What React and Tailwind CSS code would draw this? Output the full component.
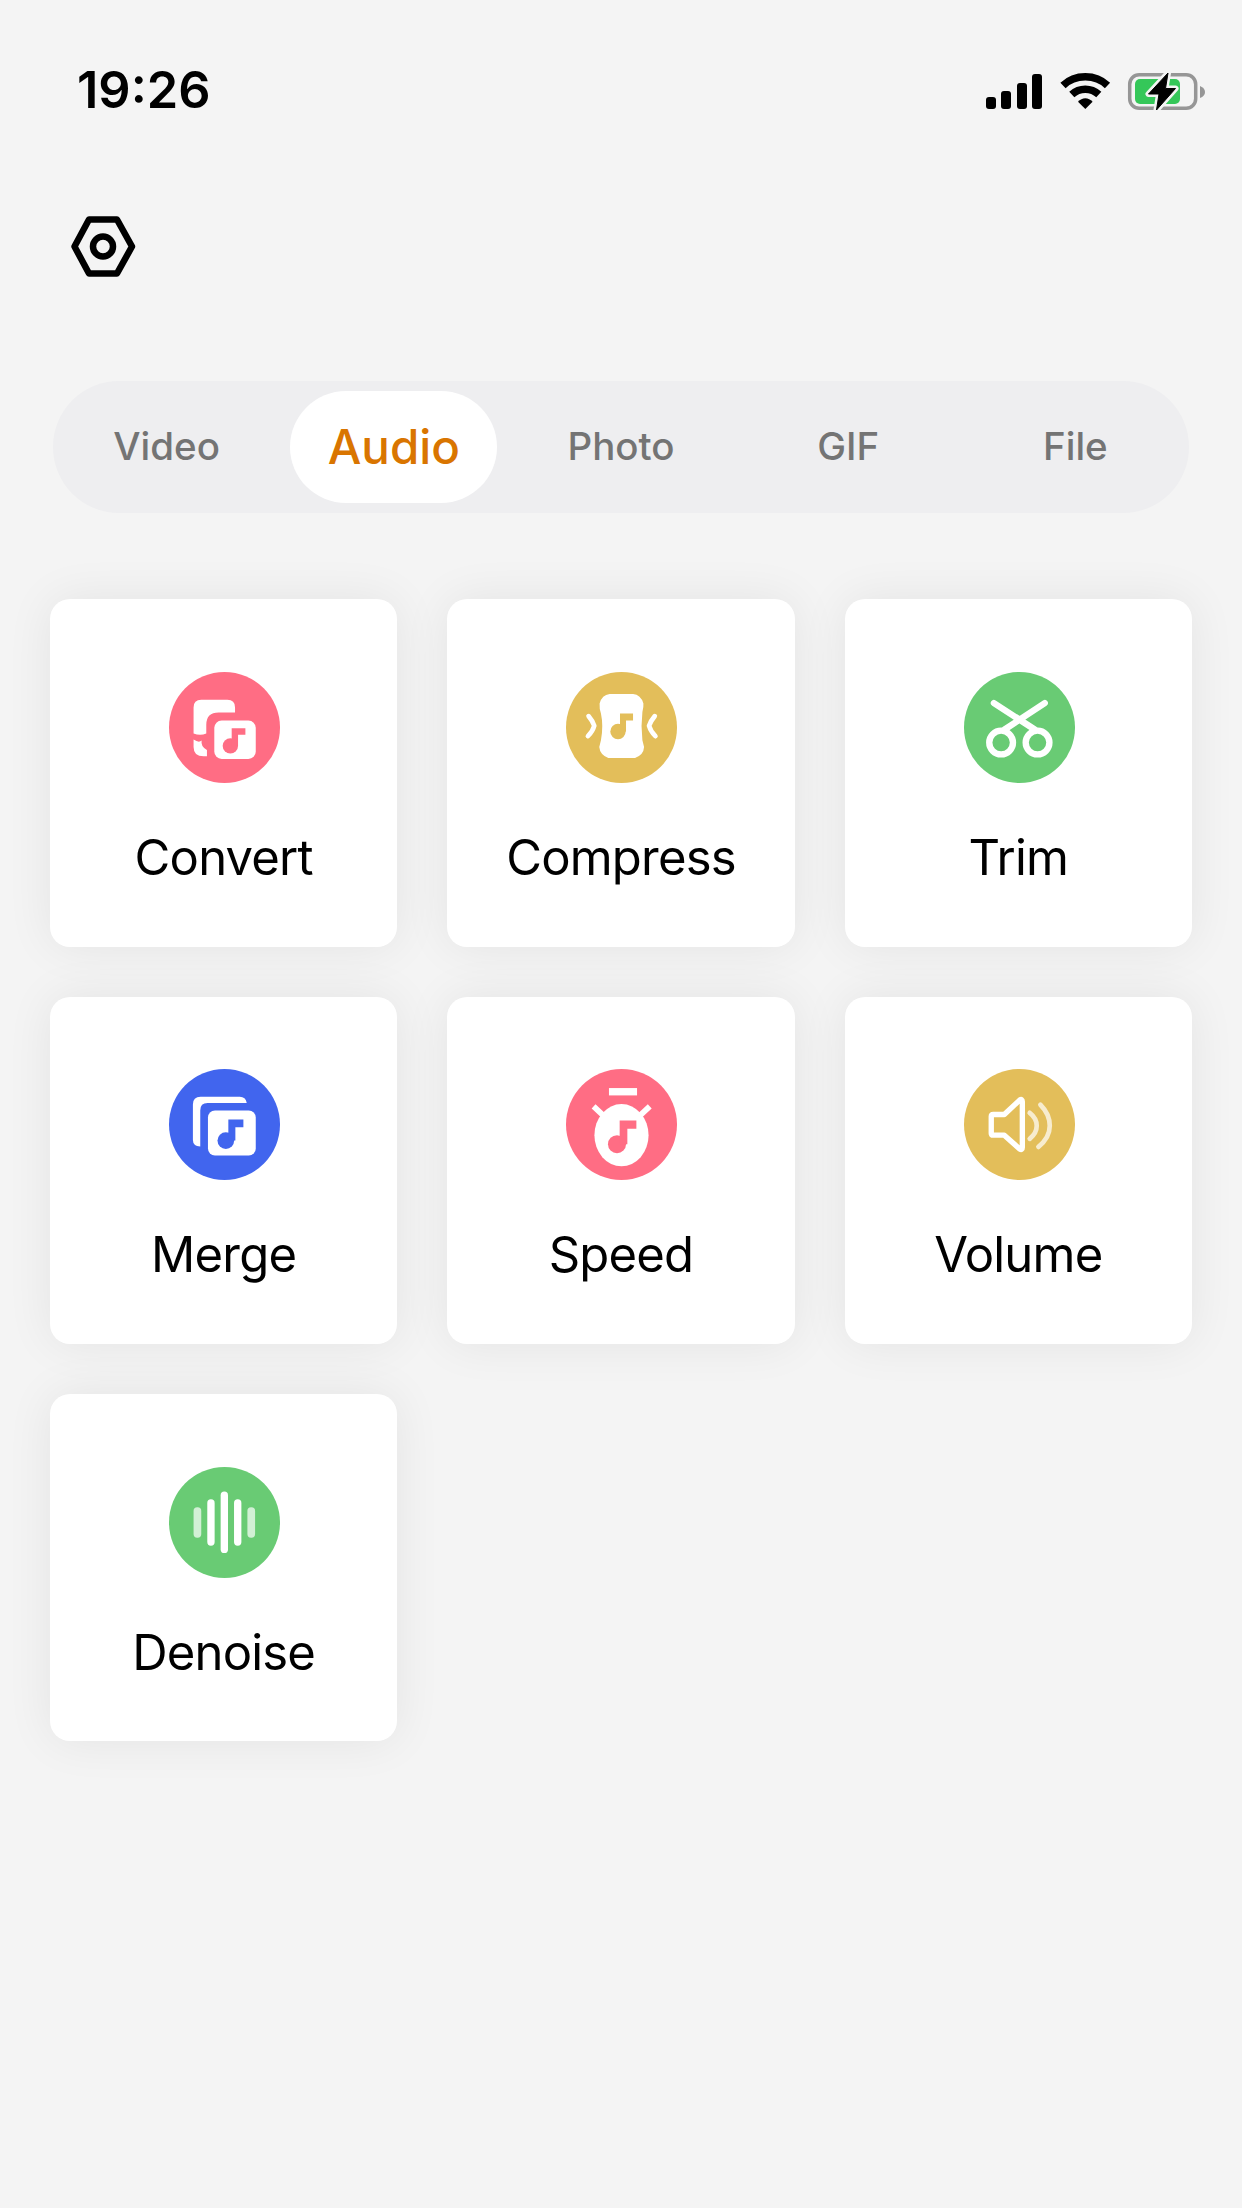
import React from 'react';

const PINK = '#ff6d84';
const GOLD = '#e3be5a';
const GREEN = '#69cb74';
const BLUE = '#4165ee';

const ConvertIcon = () => (
    <svg viewBox="56.5 66 332 332" className="w-[111px] h-[111px]">
        <circle cx="222.5" cy="232" r="166" fill={PINK} />
        <path d="M130 172Q130 149 153 149H231Q254 149 254 172V187H205Q168 187 168 224V250Q150 258 130 250Z" fill="#fff" />
        <path d="M130 268Q146 279 154 271Q151 290 170 299V318H160Q130 318 130 290Z" fill="#fff" />
        <rect x="192" y="211" width="124" height="115" rx="22" fill="#fff" />
        <circle cx="240" cy="287" r="23" fill={PINK} />
        <path d="M244 234H285V254H263V287H244Z" fill={PINK} />
    </svg>
);

const CompressIcon = () => (
    <svg viewBox="60.5 66 332 332" className="w-[111px] h-[111px]">
        <circle cx="226.5" cy="232" r="166" fill={GOLD} />
        <path d="M191 132H261Q284 134 292 160Q293 170 289 186Q284 227 289 270L294 290Q293 313 267 323H187Q162 313 160 290L165 270Q173 227 165 190Q160 176 161 160Q168 135 191 132Z" fill="#fff" />
        <path d="M128 198Q140 212 145 227Q140 244 126 258M326 198Q314 212 309 227Q314 244 328 258" fill="none" stroke="#fff" strokeWidth="14" strokeLinecap="round" strokeLinejoin="round" />
        <circle cx="216" cy="244" r="23" fill={GOLD} />
        <path d="M222 190H261V211H240V244H222Z" fill={GOLD} />
    </svg>
);

const TrimIcon = () => (
    <svg viewBox="59.5 66 332 332" className="w-[111px] h-[111px]">
        <circle cx="225.5" cy="232" r="166" fill={GREEN} />
        <g fill="none" stroke="#fff" strokeWidth="19" strokeLinecap="round">
            <path d="M149 159L271 238M301 159L181 238" />
            <circle cx="170.5" cy="277" r="35.5" />
            <circle cx="279.5" cy="277" r="35.5" />
        </g>
    </svg>
);

const MergeIcon = () => (
    <svg viewBox="56.5 64 332 332" className="w-[111px] h-[111px]">
        <circle cx="222.5" cy="230" r="166" fill={BLUE} />
        <path d="M128 170Q128 147 151 147H268Q286 147 289 166H172Q150 166 150 188V296Q128 294 128 276Z" fill="#fff" />
        <rect x="173" y="188" width="143" height="135" rx="21" fill="#fff" />
        <circle cx="226.5" cy="278" r="25" fill={BLUE} />
        <path d="M234 215H279V238H255V278H234Z" fill={BLUE} />
    </svg>
);

const SpeedIcon = () => (
    <svg viewBox="60.5 64 332 332" className="w-[111px] h-[111px]">
        <circle cx="226.5" cy="230" r="166" fill={PINK} />
        <rect x="189" y="121" width="84" height="22" fill="#fff" />
        <path d="M143 176L171 202M311 176L283 202" stroke="#fff" strokeWidth="17" />
        <ellipse cx="226.5" cy="262" rx="81" ry="93" fill="#fff" />
        <circle cx="213" cy="289" r="27" fill={PINK} />
        <path d="M221 218H271V243H244V289H221Z" fill={PINK} />
    </svg>
);

const VolumeIcon = () => (
    <svg viewBox="59.5 64 332 332" className="w-[111px] h-[111px]">
        <circle cx="225.5" cy="230" r="166" fill={GOLD} />
        <g fill="none" stroke="#fff" strokeLinecap="round" strokeLinejoin="round">
            <path d="M147 200H180L226 157Q234 152 234 162V298Q234 308 226 303L180 262H147Q141 262 141 256V206Q141 200 147 200Z" strokeWidth="16" />
            <path d="M256 195Q277 211 277 234Q277 256 256 273M288 171Q316 199 316 234Q316 270 282 297" strokeWidth="14" opacity="0.7" />
        </g>
    </svg>
);

const DenoiseIcon = () => (
    <svg viewBox="56.5 62.5 332 332" className="w-[111px] h-[111px]">
        <circle cx="222.5" cy="228.5" r="166" fill={GREEN} />
        <g fill="#fff">
            <rect x="130" y="183" width="23" height="91" rx="11" opacity="0.7" />
            <rect x="171" y="159" width="22" height="139" rx="11" />
            <rect x="211" y="136" width="22" height="184" rx="11" />
            <rect x="251" y="159" width="22" height="139" rx="11" />
            <rect x="291" y="183" width="23" height="91" rx="11" opacity="0.7" />
        </g>
    </svg>
);

const tabs = ['Video', 'Audio', 'Photo', 'GIF', 'File'];

const tools = [
    { label: 'Convert', icon: ConvertIcon },
    { label: 'Compress', icon: CompressIcon },
    { label: 'Trim', icon: TrimIcon },
    { label: 'Merge', icon: MergeIcon },
    { label: 'Speed', icon: SpeedIcon },
    { label: 'Volume', icon: VolumeIcon },
    { label: 'Denoise', icon: DenoiseIcon },
];

const StatusBar = () => (
    <div className="flex items-center justify-between h-[181px] pl-[77px] pr-9">
        <span className="text-[50.5px] leading-none font-semibold text-black">19:26</span>
        <svg viewBox="0 0 220 40" className="w-[220px] h-10">
            <g>
                <rect x="0" y="26" width="10" height="12" rx="3" />
                <rect x="15" y="20" width="10" height="18" rx="3" />
                <rect x="31" y="12" width="10" height="26" rx="3" />
                <rect x="46" y="3" width="10" height="35" rx="3" />
            </g>
            <g fill="none" stroke="#000" strokeWidth="7.5">
                <path d="M77 14.5Q86 5.8 99.3 5.8Q112.5 5.8 121.5 14.5" />
                <path d="M85.8 23.5Q91.5 18.2 99.3 18.2Q107 18.2 112.8 23.5" />
            </g>
            <path d="M99.3 38L92 30.8Q95.2 27.2 99.3 27.2Q103.400 27.2 106.6 30.8Z" />
            <rect x="143.700" y="3.700" width="66" height="33.500" rx="9.500" fill="none" stroke="#969696" strokeWidth="3.500" />
            <path d="M214 15Q219 17 219 21Q219 25 214 27Z" fill="#969696" />
            <rect x="149" y="8" width="45" height="25" rx="5" fill="#35c759" />
            <path d="M182 2L162.500 23H173L170.500 39L189.500 17.500H179.500Z" stroke="#f4f4f4" strokeWidth="6" strokeLinejoin="round" />
            <path d="M182 2L162.500 23H173L170.500 39L189.500 17.500H179.500Z" stroke="#000" strokeWidth="1" strokeLinejoin="round" />
        </svg>
    </div>
);

const App = () => {
    const activeTab = 'Audio';

    return (
        <div className="w-[1242px] h-[2208px] bg-[#f4f4f4] overflow-hidden font-['Inter',sans-serif]">
            <StatusBar />

            <div className="h-[200px] pl-[71px] pt-[35px]">
                <svg viewBox="0 0 66 62" className="w-[66px] h-[62px]" fill="none" stroke="#000" strokeWidth="6.5">
                    <path d="M18 3.500H46L61 30.500L46 57.500H18L3.500 30.500Z" strokeLinejoin="round" />
                    <circle cx="32" cy="30.500" r="10" />
                </svg>
            </div>

            <div className="mx-[53px] h-[132px] rounded-full bg-[#eeeef0] grid grid-cols-5">
                {tabs.map((tab) => (
                    <button
                        key={tab}
                        className={
                            tab === activeTab
                                ? 'm-[10px] rounded-full bg-white text-[#d97500] text-[47.5px] font-medium'
                                : 'm-[10px] text-[#747474] text-[38.5px] font-medium'
                        }
                    >
                        {tab}
                    </button>
                ))}
            </div>

            <div className="mt-[86.3px] px-[50px] grid grid-cols-3 gap-[50px]">
                {tools.map(({ label, icon: Icon }) => (
                    <div
                        key={label}
                        className="aspect-square bg-white rounded-[20px] shadow-[0_0_48px_rgba(0,0,0,0.07)] flex flex-col items-center pt-[72.7px]"
                    >
                        <div className="pl-[1.5px]">
                            <Icon />
                        </div>
                        <span className="mt-[45px] text-[49px] leading-[60px] tracking-[-0.8px] text-black">{label}</span>
                    </div>
                ))}
            </div>
        </div>
    );
};

export default App;
